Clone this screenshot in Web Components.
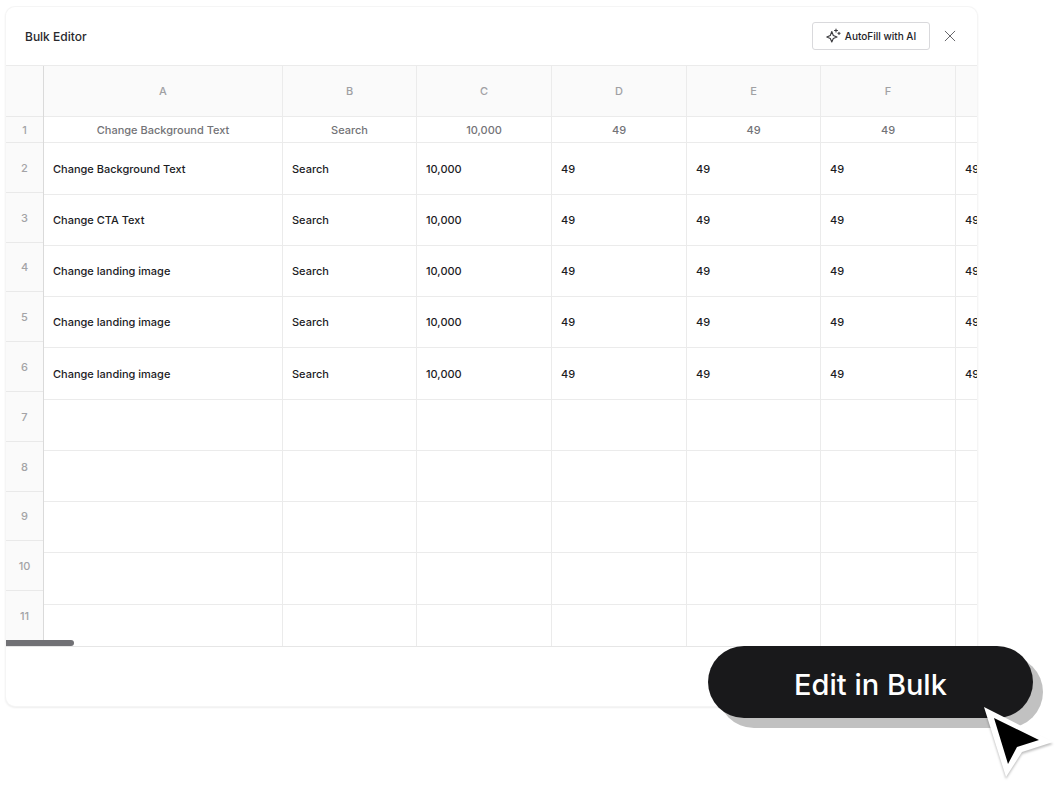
<!DOCTYPE html>
<html lang="en">
<head>
<meta charset="utf-8">
<meta name="viewport" content="width=device-width, initial-scale=1">
<title>Bulk Editor</title>
<style>
  body { margin: 0; background: #fff; font-family: Inter, "Open Sans", sans-serif; color: #1c1c1f; }
</style>
</head>
<body>
<bulk-stage>
  <editor-card>
    <span slot="title">Bulk Editor</span>
    <ai-button slot="actions">AutoFill with AI</ai-button>
    <close-button slot="actions"></close-button>
    <sheet-grid></sheet-grid>
  </editor-card>
  <cta-pill slot="overlay">Edit in Bulk</cta-pill>
</bulk-stage>
<script>
class Base extends HTMLElement {
  constructor() {
    super();
    this.attachShadow({ mode: "open" }).innerHTML =
      "<style>*{box-sizing:border-box}button{font:inherit;color:inherit;margin:0}</style>" + this.view();
  }
}

customElements.define("bulk-stage", class extends Base {
  view() { return `
    <style>
      :host { display: block; overflow: hidden; }
      main { position: relative; padding: 7px 85px 83px 6px; }
      .over { position: absolute; right: 29px; bottom: 71px; }
    </style>
    <main><slot></slot><div class="over"><slot name="overlay"></slot></div></main>`; }
});

customElements.define("editor-card", class extends Base {
  view() { return `
    <style>
      :host { display: block; }
      section { background: #fff; border-radius: 9px; overflow: hidden; padding-bottom: 59px;
        box-shadow: 0 0 0 1px #f5f5f5, 0 1px 2px 1px rgba(0,0,0,.07); }
      header { display: flex; align-items: center; justify-content: space-between; height: 58px; padding: 0 17px 0 19px; }
      h1 { margin: 0; padding-top: 2px; font-size: 12px; line-height: 16px; font-weight: 500; color: #29292d; }
      .actions { display: flex; align-items: center; gap: 10px; }
    </style>
    <section>
      <header><h1><slot name="title"></slot></h1><div class="actions"><slot name="actions"></slot></div></header>
      <slot></slot>
    </section>`; }
});

customElements.define("ai-button", class extends Base {
  view() { return `
    <style>
      :host { display: block; }
      button { display: flex; align-items: center; justify-content: center; gap: 3px; width: 118px; height: 28px; padding: 0;
        border: 1px solid #d9d9dc; border-radius: 3px; background: #fff; font-size: 10px; font-weight: 500; color: #222226; white-space: nowrap; }
    </style>
    <button type="button">
      <svg width="16" height="16" viewBox="0 0 16 16" fill="none" stroke="#3a3a3e" stroke-width="1.1" stroke-linejoin="round" stroke-linecap="round" aria-hidden="true">
        <path d="M5.8 3.5 7.3 7.5 11 9 7.3 10.5 5.8 14 4.3 10.5.8 9 4.3 7.5Z"/>
        <path d="M10 1v3M8.5 2.5h3M13 4.2v2.2M11.9 5.3h2.2"/>
      </svg>
      <span><slot></slot></span>
    </button>`; }
});

customElements.define("close-button", class extends Base {
  view() { return `
    <style>
      :host { display: block; }
      button { display: grid; place-items: center; width: 20px; height: 20px; padding: 0; border: 0; background: none; }
    </style>
    <button type="button" aria-label="Close">
      <svg width="12" height="12" viewBox="0 0 12 12" stroke="#66666b" stroke-width="1" stroke-linecap="round" aria-hidden="true"><path d="M1.2 1.2 10.8 10.8M10.8 1.2 1.2 10.8"/></svg>
    </button>`; }
});

customElements.define("sheet-grid", class extends Base {
  view() {
    const letters = ["A", "B", "C", "D", "E", "F", ""];
    const names = ["Change Background Text", "Change CTA Text", "Change landing image", "Change landing image", "Change landing image"];
    const row = n => [n, "Search", "10,000", "49", "49", "49", "49"];
    const tr = (cells, tag = "td") => "<tr>" + cells.map(c => `<${tag}>${c}</${tag}>`).join("") + "</tr>";
    const head = row(names[0]);
    head[6] = "";
    const blank = Array(5).fill(Array(7).fill(""));
    const nums = Array.from({ length: 11 }, (_, i) => `<li>${i + 1}</li>`).join("");
    return `
    <style>
      :host { display: block; }
      .sheet { display: grid; grid-template-columns: 38px minmax(0, 1fr); position: relative;
        border-top: 1px solid #ebebeb; border-bottom: 1px solid #e6e6e6; height: 582px; overflow: hidden; }
      ol { list-style: none; margin: 0; padding: 0; height: 575px; display: grid; grid-template-rows: 51px 26px repeat(10, minmax(0, 1fr));
        background: #fafafa; border-right: 1px solid #dadada; font-size: 11px; font-weight: 500; color: #a3a3a6; }
      ol > * { display: grid; place-items: center; padding-top: 1px; border-bottom: 1px solid #e9e9e9; }
      .view { overflow: hidden; }
      table { border-collapse: separate; border-spacing: 0; table-layout: fixed; width: 1047px; font-size: 11px; line-height: 14px; font-weight: 500; color: #1c1c1f; }
      col { width: 135px; } col:first-child { width: 239px; } col:nth-child(3n+2) { width: 134px; }
      th, td { height: 51px; padding: 0 9px; text-align: left; border-right: 1px solid #ebebeb; border-bottom: 1px solid #ebebeb; white-space: nowrap; }
      td:first-child { padding-left: 9px; }
      th { background: #fafafa; color: #a0a0a3; text-align: center; font-weight: 500; }
      thead tr:nth-child(2) td { height: 26px; padding: 1px 0 0; text-align: center; color: #737377; }
      tbody tr:nth-child(4n+1) td { height: 52px; }
      .thumb { position: absolute; left: 0; bottom: 0; width: 68px; height: 6px; background: #717175; border-radius: 0 3px 3px 0; }
    </style>
    <div class="sheet">
      <ol><li aria-hidden="true"></li>${nums}</ol>
      <div class="view"><table>
        <colgroup>${"<col>".repeat(7)}</colgroup>
        <thead>${tr(letters, "th")}${tr(head)}</thead>
        <tbody>${names.map(n => tr(row(n))).join("")}${blank.map(r => tr(r)).join("")}</tbody>
      </table></div>
      <div class="thumb"></div>
    </div>`;
  }
});

customElements.define("cta-pill", class extends Base {
  view() { return `
    <style>
      :host { display: block; position: relative; }
      button { display: block; width: 325px; height: 72px; padding: 5px 0 0; border: 0; border-radius: 36px; background: #19191b;
        color: #fff; font-size: 29px; font-weight: 500; text-align: center; box-shadow: 10px 10px 0 #c1c1c1; }
      svg { position: absolute; left: 272px; top: 56px; filter: drop-shadow(0 2px 1px rgba(0,0,0,.25)); }
    </style>
    <button type="button"><slot></slot></button>
    <svg width="78" height="84" viewBox="0 0 78 84" aria-hidden="true">
      <path fill="#fff" d="M4 5 73 40 42 50 26 75Z"/>
      <path fill="#000" d="M14 16 59 38 37 45 28 62Z"/>
    </svg>`; }
});
</script>
</body>
</html>
